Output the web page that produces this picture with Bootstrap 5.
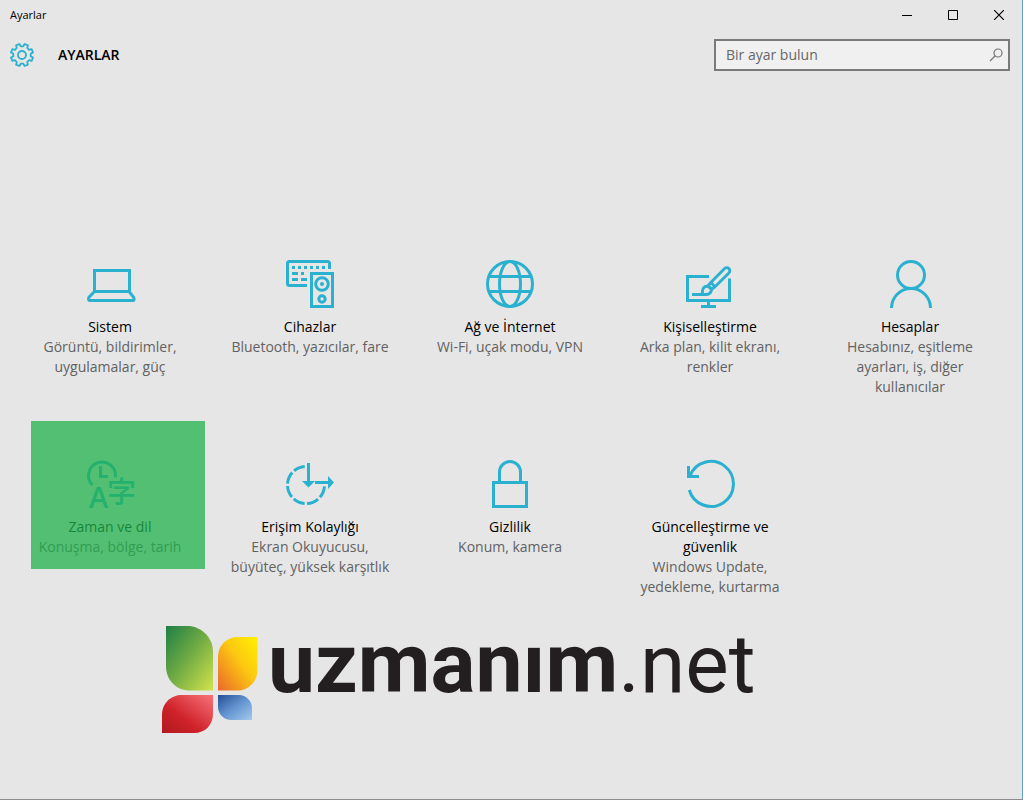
<!DOCTYPE html>
<html lang="tr">
<head>
<meta charset="utf-8">
<meta name="viewport" content="width=device-width, initial-scale=1">
<title>Ayarlar</title>
<link href="https://cdn.jsdelivr.net/npm/bootstrap@5.3.0/dist/css/bootstrap.min.css" rel="stylesheet">
<style>
  :root { --accent: #2bb1d0; --ink: #000; --muted: #626262; }
  body { background: #e6e6e6; color: var(--ink); font: 14px/20px "Open Sans", "Noto Sans", sans-serif; }
  .app-window { border-right: 1px solid #3db3d3; border-bottom: 1px solid #8c8c8c; }
  .title-bar { height: 30px; padding-left: 10px; font-size: 11px; }
  .win-btn { width: 46px; height: 30px; border: 0; background: none; padding: 0; }
  .app-header { height: 50px; padding: 0 12px 0 10px; }
  .app-title { font-size: 14px; line-height: 20px; font-weight: 600; }
  .search-box { width: 296px; height: 32px; border: 2px solid #7a7a7a; background: #f0f0f0; }
  .search-box input { background: none; border: 0; outline: 0; min-width: 0; padding: 0 10px; color: #555; font-size: 14px; }
  .search-box input::placeholder { color: #666; opacity: 1; }
  .search-box button { width: 24px; border: 0; background: none; padding: 0; color: #777; }
  .line-icon { fill: none; stroke: var(--accent); stroke-width: 3; }
  .gear-icon { stroke-width: 1.8; }
  .line-icon .solid { fill: var(--accent); stroke: none; }
  .settings-area { padding: 160px 12px 0 10px; }
  .settings-row { --bs-gutter-x: 0; --bs-gutter-y: 14px; margin-top: -14px; }
  .tile { min-height: 186px; padding: 20px 14px 0; color: var(--ink); }
  .tile .line-icon { margin-bottom: 9px; }
  .tile-desc { color: var(--muted); }
  .tile-marked::after { content: ""; position: absolute; left: 21px; right: 5px; top: -19px; height: 148px; background: rgba(34,177,76,.75); pointer-events: none; }
  .brand { padding-left: 162px; gap: 10px; color: #231f20; }
  .brand-name { font: 700 84px/76px Roboto, "Liberation Sans", sans-serif; }
  .brand-name span { font-weight: 400; font-size: 82px; }
</style>
</head>
<body>
<div class="app-window min-vh-100 d-flex flex-column">
  <div class="title-bar d-flex align-items-center">
    <span class="me-auto">Ayarlar</span>
    <button class="win-btn" type="button" aria-label="Simge durumuna küçült"><svg class="d-block mx-auto" width="10" height="10"><path d="M0 5.5H10" stroke="#000"/></svg></button>
    <button class="win-btn" type="button" aria-label="Ekranı kapla"><svg class="d-block mx-auto" width="10" height="10"><path d="M.5.5H9.5V9.5H.5Z" fill="none" stroke="#000"/></svg></button>
    <button class="win-btn" type="button" aria-label="Kapat"><svg class="d-block mx-auto" width="10" height="10"><path d="M0 0L10 10M10 0L0 10" stroke="#000" stroke-width="1.2"/></svg></button>
  </div>
  <header class="app-header d-flex align-items-center">
    <svg class="line-icon gear-icon" width="24" height="24" viewBox="-12 -12 24 24"><path stroke-linejoin="round" d="M8.7 1.3L11 2.64 9.63 5.9 7.07 5.23 5.23 7.07 5.9 9.63 2.64 11 1.3 8.7H-1.3L-2.64 11-5.9 9.63-5.23 7.07-7.07 5.23-9.63 5.9-11 2.64-8.7 1.3V-1.3L-11-2.64-9.63-5.9-7.07-5.23-5.23-7.07-5.9-9.63-2.64-11-1.3-8.7H1.3L2.64-11 5.9-9.63 5.23-7.07 7.07-5.23 9.63-5.9 11-2.64 8.7-1.3Z"/><circle r="4"/></svg>
    <h1 class="app-title mb-0 ms-4 me-auto">AYARLAR</h1>
    <form class="search-box d-flex" role="search" onsubmit="return false">
      <input class="flex-grow-1" type="search" placeholder="Bir ayar bulun" aria-label="Bir ayar bulun">
      <button type="submit" aria-label="Ara"><svg class="d-block mx-auto" width="14" height="14" viewBox="0 0 14 14" fill="none" stroke="currentColor" stroke-width="1.2"><circle cx="9" cy="5" r="4"/><path d="M6 8L1 13"/></svg></button>
    </form>
  </header>
  <main class="settings-area">
    <ul class="settings-row row row-cols-5 list-unstyled mb-0 text-center">
      <li class="col"><a class="tile d-block text-decoration-none" href="#">
        <svg class="line-icon overflow-visible" width="48" height="48" viewBox="0 0 48 48"><path d="M8.500 10.500H43.500V31.500H8.500ZM8.500 31.500L3 37.200Q2.500 38 2.500 39Q2.600 40.500 4 40.500H47Q48.200 40.500 48 39Q48 38 47.500 37L43 31.500"/></svg>
        <span class="d-block">Sistem</span><span class="tile-desc d-block">Görüntü, bildirimler, uygulamalar, güç</span></a></li>
      <li class="col"><a class="tile d-block text-decoration-none" href="#">
        <svg class="line-icon" width="48" height="48" viewBox="0 0 48 48"><path d="M21 25.500H3.500Q1.500 25.500 1.500 23.500V3.500Q1.500 1.500 3.500 1.500H41.500Q43.500 1.500 43.500 3.500V9M25.500 13.500H46.500V46.500H25.500Z"/><path class="solid" d="M6 6h3v3h-3zM12 6h3v3h-3zM18 6h3v3h-3zM24 6h3v3h-3zM30 6h3v3h-3zM36 6h3v3h-3zM6 12h6v3H6zM15 12h3v3h-3zM6 18h6v3H6zM15 18h6v3h-6z"/><circle cx="36" cy="24" r="6.300"/><circle class="solid" cx="36" cy="24" r="2"/><circle cx="36" cy="39" r="3.200"/></svg>
        <span class="d-block">Cihazlar</span><span class="tile-desc d-block">Bluetooth, yazıcılar, fare</span></a></li>
      <li class="col"><a class="tile d-block text-decoration-none" href="#">
        <svg class="line-icon" width="48" height="48" viewBox="0 0 48 48"><circle cx="24" cy="24" r="22.500"/><ellipse cx="24" cy="24" rx="10.500" ry="22.500"/><path d="M3 16.500H45M3 31.500H45"/></svg>
        <span class="d-block">Ağ ve İnternet</span><span class="tile-desc d-block">Wi-Fi, uçak modu, VPN</span></a></li>
      <li class="col"><a class="tile d-block text-decoration-none" href="#">
        <svg class="line-icon" width="48" height="48" viewBox="0 0 48 48"><path d="M23 16.500H1.500V40.500H43.500V18.500M22.500 42V46M15 46.500H30M6 34.500H18"/><path stroke-width="2.900" d="M24.800 22.500L38.600 8.600A3 3 0 0 1 42.900 12.900L29 26.700ZM24.800 22.500L22 26M29 26.700L25.500 29.500M22 26L25.500 29.500M16 34.500C17 33.500 15.500 31 17.500 28Q19.500 25.500 22.500 26.500Q26 28.500 25.300 31Q24 34.500 20 34.500Z"/></svg>
        <span class="d-block">Kişiselleştirme</span><span class="tile-desc d-block">Arka plan, kilit ekranı, renkler</span></a></li>
      <li class="col"><a class="tile d-block text-decoration-none" href="#">
        <svg class="line-icon" width="48" height="48" viewBox="0 0 48 48"><circle cx="25" cy="15" r="13.500"/><path d="M5.500 48A19.500 19.500 0 0 1 44.500 48"/></svg>
        <span class="d-block">Hesaplar</span><span class="tile-desc d-block">Hesabınız, eşitleme ayarları, iş, diğer kullanıcılar</span></a></li>
      <li class="col"><a class="tile tile-marked d-block position-relative text-decoration-none" href="#">
        <svg class="line-icon overflow-visible" width="48" height="48" viewBox="0 0 48 48"><path d="M6.600 25.200A13.500 13.500 0 1 1 29.400 17.200M14.500 6V16.500H22"/><text class="solid" x="3" y="48" font-family="Open Sans, sans-serif" font-weight="600" font-size="29">A</text><text class="solid" x="21" y="43" font-family="Noto Sans CJK JP, sans-serif" font-weight="500" font-size="29">字</text></svg>
        <span class="d-block">Zaman ve dil</span><span class="tile-desc d-block">Konuşma, bölge, tarih</span></a></li>
      <li class="col"><a class="tile d-block text-decoration-none" href="#">
        <svg class="line-icon" width="48" height="48" viewBox="0 0 48 48"><path stroke-dasharray="12 2.500" d="M38.460 26.300A18.500 18.500 0 1 1 18.700 6.550"/><path d="M22.500 3V22M29 22.500H43"/><path class="solid" d="M16 21H29L22.500 27.500ZM42 16L48 22.500 42 29Z"/></svg>
        <span class="d-block">Erişim Kolaylığı</span><span class="tile-desc d-block">Ekran Okuyucusu, büyüteç, yüksek karşıtlık</span></a></li>
      <li class="col"><a class="tile d-block text-decoration-none" href="#">
        <svg class="line-icon" width="48" height="48" viewBox="0 0 48 48"><path d="M7.500 22.500H40.500V46.500H7.500ZM13.500 22V12A10.500 10.500 0 0 1 34.500 12V22"/></svg>
        <span class="d-block">Gizlilik</span><span class="tile-desc d-block">Konum, kamera</span></a></li>
      <li class="col"><a class="tile d-block text-decoration-none" href="#">
        <svg class="line-icon overflow-visible" width="48" height="48" viewBox="0 0 48 48"><path d="M3.300 30A22.500 22.500 0 1 0 3.900 16M2.500 6V16.500H13"/></svg>
        <span class="d-block">Güncelleştirme ve güvenlik</span><span class="tile-desc d-block">Windows Update, yedekleme, kurtarma</span></a></li>
    </ul>
  </main>
  <div class="brand d-flex align-items-start">
    <svg class="flex-shrink-0" width="96" height="107" viewBox="0 0 96 107" aria-hidden="true">
      <defs>
        <linearGradient id="leafGreen" x1="0" y1="0" x2="1" y2="1"><stop offset="0" stop-color="#1f7f45"/><stop offset=".45" stop-color="#6aa843"/><stop offset="1" stop-color="#d3e34b"/></linearGradient>
        <linearGradient id="leafYellow" x1="1" y1="0" x2="0" y2="1"><stop offset="0" stop-color="#fff200"/><stop offset=".45" stop-color="#fcc711"/><stop offset="1" stop-color="#e9682a"/></linearGradient>
        <linearGradient id="leafRed" x1="1" y1="0" x2="0" y2="1"><stop offset="0" stop-color="#f8727a"/><stop offset=".6" stop-color="#cf2229"/><stop offset="1" stop-color="#b0191f"/></linearGradient>
        <linearGradient id="leafBlue" x1="0" y1="0" x2="1" y2="1"><stop offset="0" stop-color="#234f96"/><stop offset=".5" stop-color="#6495d0"/><stop offset="1" stop-color="#a3c9ee"/></linearGradient>
      </defs>
      <path fill="url(#leafGreen)" d="M4 0H28C41 2 51 12 51 26V64.500H28C14 64.500 4 54 4 40Z"/>
      <path fill="url(#leafYellow)" d="M56 64.500V31C56 19 65 11 76 11H95.500V44C95.500 56 86 64.500 75 64.500Z"/>
      <path fill="url(#leafRed)" d="M0 107V89C0 77 9 69 20 69H51V88C51 99 43 107 32 107Z"/>
      <path fill="url(#leafBlue)" d="M56 69H77C84 69 90 75 90 82V94H69C62 94 56 88 56 81Z"/>
    </svg>
    <div class="brand-name">uzmanım<span>.net</span></div>
  </div>
</div>
<script src="https://cdn.jsdelivr.net/npm/bootstrap@5.3.0/dist/js/bootstrap.bundle.min.js"></script>
</body>
</html>
